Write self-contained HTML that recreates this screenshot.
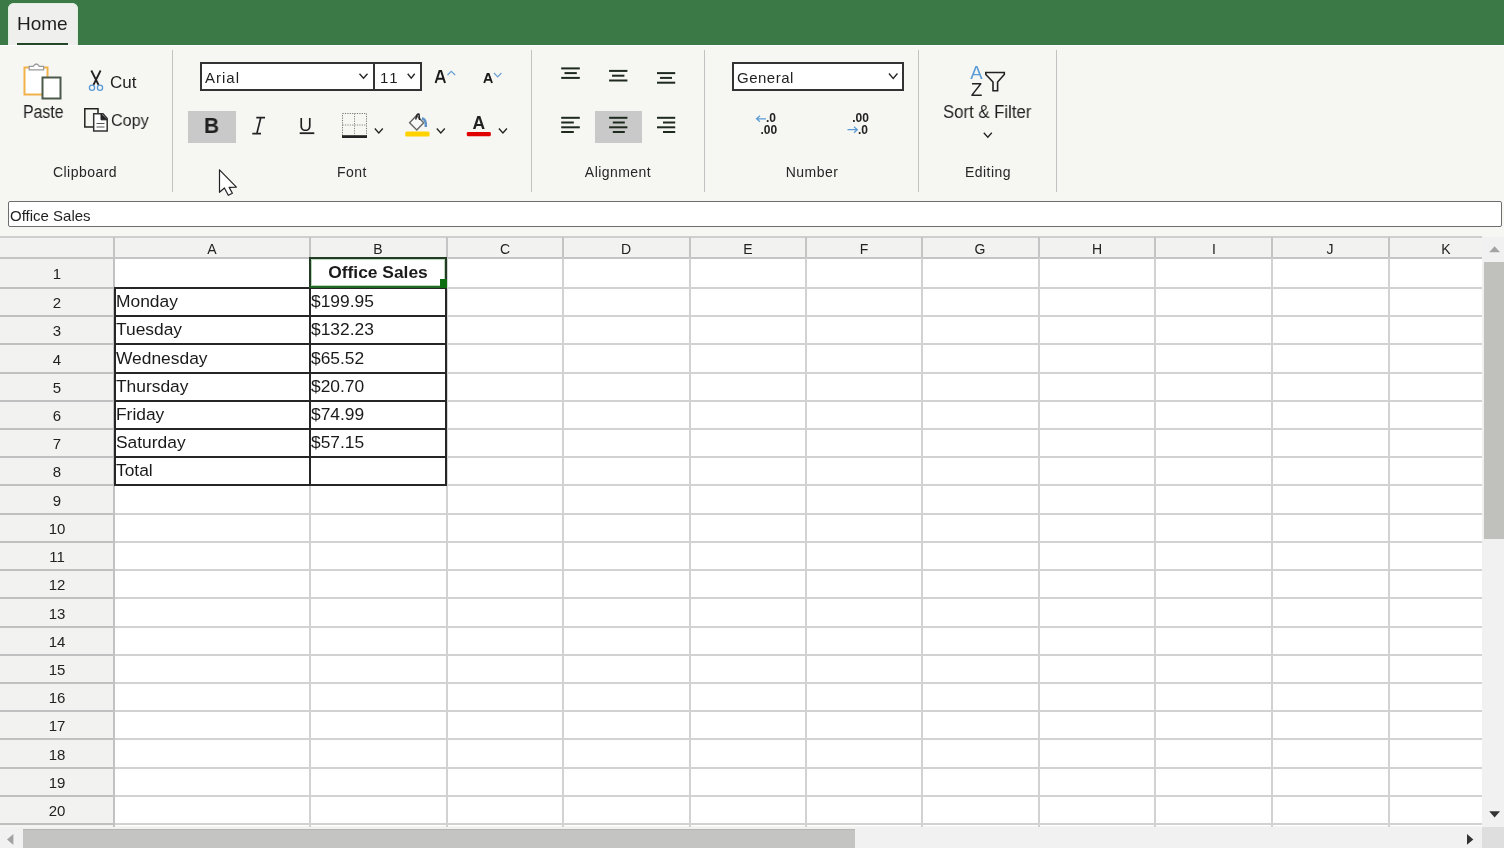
<!DOCTYPE html>
<html><head><meta charset="utf-8"><title>Spreadsheet</title><style>
*{margin:0;padding:0;box-sizing:border-box}
html,body{width:1504px;height:848px;overflow:hidden;background:#f6f6f3;font-family:"Liberation Sans",sans-serif;color:#1f1f1f}
.a{position:absolute}
.t{position:absolute;white-space:nowrap;line-height:1;will-change:transform}
.c{text-align:center}
svg{pointer-events:none}
</style></head><body>
<div class="a" style="left:0;top:0;width:1504px;height:45px;background:#3b7a46"></div>
<div class="a" style="left:8px;top:3px;width:70px;height:43px;background:#efefee;border-radius:6px 6px 0 0;box-shadow:0 0 0 1px #dfeedd inset"></div>
<div class="t" style="left:17px;top:14.2px;font-size:19px;">Home</div>
<div class="a" style="left:0;top:45px;width:1504px;height:1px;background:#fbfbfb"></div>
<div class="a" style="left:17px;top:43px;width:51px;height:2px;background:#24472a"></div>
<div class="a" style="left:172px;top:50px;width:1px;height:142px;background:#c2c2c2"></div>
<div class="a" style="left:531px;top:50px;width:1px;height:142px;background:#c2c2c2"></div>
<div class="a" style="left:704px;top:50px;width:1px;height:142px;background:#c2c2c2"></div>
<div class="a" style="left:918px;top:50px;width:1px;height:142px;background:#c2c2c2"></div>
<div class="a" style="left:1056px;top:50px;width:1px;height:142px;background:#c2c2c2"></div>
<div class="t c" style="left:-65px;top:164.7px;width:300px;font-size:14px;letter-spacing:0.45px;color:#262626">Clipboard</div>
<div class="t c" style="left:202px;top:164.7px;width:300px;font-size:14px;letter-spacing:0.45px;color:#262626">Font</div>
<div class="t c" style="left:468.4px;top:164.7px;width:300px;font-size:14px;letter-spacing:0.45px;color:#262626">Alignment</div>
<div class="t c" style="left:661.8px;top:164.7px;width:300px;font-size:14px;letter-spacing:0.45px;color:#262626">Number</div>
<div class="t c" style="left:837.7px;top:164.7px;width:300px;font-size:14px;letter-spacing:0.45px;color:#262626">Editing</div>
<div class="t" style="left:23px;top:103.0px;font-size:18px;transform:scaleX(0.88);transform-origin:0 0">Paste</div>
<div class="t" style="left:110px;top:73.8px;font-size:17px;">Cut</div>
<div class="t" style="left:110.5px;top:112.2px;font-size:17px;transform:scaleX(0.95);transform-origin:0 0">Copy</div>
<div class="a" style="left:200px;top:62px;width:175px;height:29px;background:#fff;border:2px solid #333"></div>
<div class="a" style="left:373px;top:62px;width:49px;height:29px;background:#fff;border:2px solid #333"></div>
<div class="t" style="left:205px;top:70.0px;font-size:15px;letter-spacing:1px">Arial</div>
<div class="t" style="left:380px;top:70.4px;font-size:15px;letter-spacing:2px">11</div>
<div class="a" style="left:732px;top:62px;width:172px;height:29px;border:2px solid #333;background:#fff"></div>
<div class="t" style="left:737px;top:70.0px;font-size:15px;letter-spacing:0.5px">General</div>
<div class="a" style="left:188px;top:111px;width:48px;height:32px;background:#c9c9c9"></div>
<div class="a" style="left:595px;top:111px;width:47px;height:32px;background:#c9c9c9"></div>
<div class="t" style="left:204.3px;top:115px;font-size:22px;font-weight:bold;transform:scaleX(0.95);transform-origin:0 0">B</div>
<div class="t" style="left:299px;top:116px;font-size:18px;">U</div>
<div class="t" style="left:943px;top:103.2px;font-size:18px;transform:scaleX(0.93);transform-origin:0 0">Sort &amp; Filter</div>
<div class="a" style="left:8px;top:201px;width:1494px;height:26px;background:#fff;border:1px solid #6e6e6e;border-radius:2px"></div>
<div class="t" style="left:10px;top:208.4px;font-size:15px;">Office Sales</div>
<div class="a" style="left:0;top:237px;width:1482px;height:589px;background:#fff"></div>
<div class="a" style="left:0;top:237px;width:1482px;height:20.399999999999977px;background:#f2f2f1"></div>
<div class="a" style="left:0;top:237px;width:114px;height:589px;background:#f2f2f1"></div>
<div class="a" style="left:0;top:236px;width:1482px;height:2px;background:#cfcfcf"></div>
<div class="a" style="left:0;top:256.5px;width:1482px;height:2px;background:#c4c4c4"></div>
<div class="a" style="left:114px;top:287.00px;width:1368px;height:2px;background:#d2d2d2"></div>
<div class="a" style="left:0;top:287.00px;width:114px;height:2px;background:#c0c0c0"></div>
<div class="a" style="left:114px;top:315.21px;width:1368px;height:2px;background:#d2d2d2"></div>
<div class="a" style="left:0;top:315.21px;width:114px;height:2px;background:#c0c0c0"></div>
<div class="a" style="left:114px;top:343.42px;width:1368px;height:2px;background:#d2d2d2"></div>
<div class="a" style="left:0;top:343.42px;width:114px;height:2px;background:#c0c0c0"></div>
<div class="a" style="left:114px;top:371.63px;width:1368px;height:2px;background:#d2d2d2"></div>
<div class="a" style="left:0;top:371.63px;width:114px;height:2px;background:#c0c0c0"></div>
<div class="a" style="left:114px;top:399.84px;width:1368px;height:2px;background:#d2d2d2"></div>
<div class="a" style="left:0;top:399.84px;width:114px;height:2px;background:#c0c0c0"></div>
<div class="a" style="left:114px;top:428.05px;width:1368px;height:2px;background:#d2d2d2"></div>
<div class="a" style="left:0;top:428.05px;width:114px;height:2px;background:#c0c0c0"></div>
<div class="a" style="left:114px;top:456.26px;width:1368px;height:2px;background:#d2d2d2"></div>
<div class="a" style="left:0;top:456.26px;width:114px;height:2px;background:#c0c0c0"></div>
<div class="a" style="left:114px;top:484.47px;width:1368px;height:2px;background:#d2d2d2"></div>
<div class="a" style="left:0;top:484.47px;width:114px;height:2px;background:#c0c0c0"></div>
<div class="a" style="left:114px;top:512.68px;width:1368px;height:2px;background:#d2d2d2"></div>
<div class="a" style="left:0;top:512.68px;width:114px;height:2px;background:#c0c0c0"></div>
<div class="a" style="left:114px;top:540.89px;width:1368px;height:2px;background:#d2d2d2"></div>
<div class="a" style="left:0;top:540.89px;width:114px;height:2px;background:#c0c0c0"></div>
<div class="a" style="left:114px;top:569.10px;width:1368px;height:2px;background:#d2d2d2"></div>
<div class="a" style="left:0;top:569.10px;width:114px;height:2px;background:#c0c0c0"></div>
<div class="a" style="left:114px;top:597.31px;width:1368px;height:2px;background:#d2d2d2"></div>
<div class="a" style="left:0;top:597.31px;width:114px;height:2px;background:#c0c0c0"></div>
<div class="a" style="left:114px;top:625.52px;width:1368px;height:2px;background:#d2d2d2"></div>
<div class="a" style="left:0;top:625.52px;width:114px;height:2px;background:#c0c0c0"></div>
<div class="a" style="left:114px;top:653.73px;width:1368px;height:2px;background:#d2d2d2"></div>
<div class="a" style="left:0;top:653.73px;width:114px;height:2px;background:#c0c0c0"></div>
<div class="a" style="left:114px;top:681.94px;width:1368px;height:2px;background:#d2d2d2"></div>
<div class="a" style="left:0;top:681.94px;width:114px;height:2px;background:#c0c0c0"></div>
<div class="a" style="left:114px;top:710.15px;width:1368px;height:2px;background:#d2d2d2"></div>
<div class="a" style="left:0;top:710.15px;width:114px;height:2px;background:#c0c0c0"></div>
<div class="a" style="left:114px;top:738.36px;width:1368px;height:2px;background:#d2d2d2"></div>
<div class="a" style="left:0;top:738.36px;width:114px;height:2px;background:#c0c0c0"></div>
<div class="a" style="left:114px;top:766.57px;width:1368px;height:2px;background:#d2d2d2"></div>
<div class="a" style="left:0;top:766.57px;width:114px;height:2px;background:#c0c0c0"></div>
<div class="a" style="left:114px;top:794.78px;width:1368px;height:2px;background:#d2d2d2"></div>
<div class="a" style="left:0;top:794.78px;width:114px;height:2px;background:#c0c0c0"></div>
<div class="a" style="left:114px;top:822.99px;width:1368px;height:2px;background:#d2d2d2"></div>
<div class="a" style="left:0;top:822.99px;width:114px;height:2px;background:#c0c0c0"></div>
<div class="a" style="left:113.00px;top:258px;width:2px;height:569px;background:#c2c2c2"></div>
<div class="a" style="left:113.00px;top:237px;width:2px;height:21px;background:#c4c4c4"></div>
<div class="a" style="left:308.50px;top:258px;width:2px;height:569px;background:#d2d2d2"></div>
<div class="a" style="left:308.50px;top:237px;width:2px;height:21px;background:#c4c4c4"></div>
<div class="a" style="left:445.50px;top:258px;width:2px;height:569px;background:#d2d2d2"></div>
<div class="a" style="left:445.50px;top:237px;width:2px;height:21px;background:#c4c4c4"></div>
<div class="a" style="left:562.30px;top:258px;width:2px;height:569px;background:#d2d2d2"></div>
<div class="a" style="left:562.30px;top:237px;width:2px;height:21px;background:#c4c4c4"></div>
<div class="a" style="left:688.50px;top:258px;width:2px;height:569px;background:#d2d2d2"></div>
<div class="a" style="left:688.50px;top:237px;width:2px;height:21px;background:#c4c4c4"></div>
<div class="a" style="left:805.00px;top:258px;width:2px;height:569px;background:#d2d2d2"></div>
<div class="a" style="left:805.00px;top:237px;width:2px;height:21px;background:#c4c4c4"></div>
<div class="a" style="left:921.00px;top:258px;width:2px;height:569px;background:#d2d2d2"></div>
<div class="a" style="left:921.00px;top:237px;width:2px;height:21px;background:#c4c4c4"></div>
<div class="a" style="left:1037.70px;top:258px;width:2px;height:569px;background:#d2d2d2"></div>
<div class="a" style="left:1037.70px;top:237px;width:2px;height:21px;background:#c4c4c4"></div>
<div class="a" style="left:1154.20px;top:258px;width:2px;height:569px;background:#d2d2d2"></div>
<div class="a" style="left:1154.20px;top:237px;width:2px;height:21px;background:#c4c4c4"></div>
<div class="a" style="left:1271.00px;top:258px;width:2px;height:569px;background:#d2d2d2"></div>
<div class="a" style="left:1271.00px;top:237px;width:2px;height:21px;background:#c4c4c4"></div>
<div class="a" style="left:1387.50px;top:258px;width:2px;height:569px;background:#d2d2d2"></div>
<div class="a" style="left:1387.50px;top:237px;width:2px;height:21px;background:#c4c4c4"></div>
<div class="t c" style="left:61.75px;top:241.9px;width:300px;font-size:14px;color:#222">A</div>
<div class="t c" style="left:228.0px;top:241.9px;width:300px;font-size:14px;color:#222">B</div>
<div class="t c" style="left:354.9px;top:241.9px;width:300px;font-size:14px;color:#222">C</div>
<div class="t c" style="left:476.4px;top:241.9px;width:300px;font-size:14px;color:#222">D</div>
<div class="t c" style="left:597.75px;top:241.9px;width:300px;font-size:14px;color:#222">E</div>
<div class="t c" style="left:714.0px;top:241.9px;width:300px;font-size:14px;color:#222">F</div>
<div class="t c" style="left:830.35px;top:241.9px;width:300px;font-size:14px;color:#222">G</div>
<div class="t c" style="left:946.95px;top:241.9px;width:300px;font-size:14px;color:#222">H</div>
<div class="t c" style="left:1063.6px;top:241.9px;width:300px;font-size:14px;color:#222">I</div>
<div class="t c" style="left:1180.25px;top:241.9px;width:300px;font-size:14px;color:#222">J</div>
<div class="t c" style="left:1296.25px;top:241.9px;width:300px;font-size:14px;color:#222">K</div>
<div class="t c" style="left:-93.5px;top:265.8px;width:300px;font-size:15px;color:#222">1</div>
<div class="t c" style="left:-93.5px;top:295.20500000000004px;width:300px;font-size:15px;color:#222">2</div>
<div class="t c" style="left:-93.5px;top:323.415px;width:300px;font-size:15px;color:#222">3</div>
<div class="t c" style="left:-93.5px;top:351.625px;width:300px;font-size:15px;color:#222">4</div>
<div class="t c" style="left:-93.5px;top:379.83500000000004px;width:300px;font-size:15px;color:#222">5</div>
<div class="t c" style="left:-93.5px;top:408.0450000000001px;width:300px;font-size:15px;color:#222">6</div>
<div class="t c" style="left:-93.5px;top:436.255px;width:300px;font-size:15px;color:#222">7</div>
<div class="t c" style="left:-93.5px;top:464.46500000000003px;width:300px;font-size:15px;color:#222">8</div>
<div class="t c" style="left:-93.5px;top:492.67500000000007px;width:300px;font-size:15px;color:#222">9</div>
<div class="t c" style="left:-93.5px;top:520.8850000000001px;width:300px;font-size:15px;color:#222">10</div>
<div class="t c" style="left:-93.5px;top:549.095px;width:300px;font-size:15px;color:#222">11</div>
<div class="t c" style="left:-93.5px;top:577.305px;width:300px;font-size:15px;color:#222">12</div>
<div class="t c" style="left:-93.5px;top:605.515px;width:300px;font-size:15px;color:#222">13</div>
<div class="t c" style="left:-93.5px;top:633.725px;width:300px;font-size:15px;color:#222">14</div>
<div class="t c" style="left:-93.5px;top:661.9350000000001px;width:300px;font-size:15px;color:#222">15</div>
<div class="t c" style="left:-93.5px;top:690.1450000000001px;width:300px;font-size:15px;color:#222">16</div>
<div class="t c" style="left:-93.5px;top:718.3550000000001px;width:300px;font-size:15px;color:#222">17</div>
<div class="t c" style="left:-93.5px;top:746.5649999999999px;width:300px;font-size:15px;color:#222">18</div>
<div class="t c" style="left:-93.5px;top:774.775px;width:300px;font-size:15px;color:#222">19</div>
<div class="t c" style="left:-93.5px;top:802.985px;width:300px;font-size:15px;color:#222">20</div>
<div class="a" style="left:113.5px;top:287.00px;width:333.5px;height:2px;background:#262626"></div>
<div class="a" style="left:113.5px;top:315.21px;width:333.5px;height:2px;background:#262626"></div>
<div class="a" style="left:113.5px;top:343.42px;width:333.5px;height:2px;background:#262626"></div>
<div class="a" style="left:113.5px;top:371.63px;width:333.5px;height:2px;background:#262626"></div>
<div class="a" style="left:113.5px;top:399.84px;width:333.5px;height:2px;background:#262626"></div>
<div class="a" style="left:113.5px;top:428.05px;width:333.5px;height:2px;background:#262626"></div>
<div class="a" style="left:113.5px;top:456.26px;width:333.5px;height:2px;background:#262626"></div>
<div class="a" style="left:113.5px;top:484.47px;width:333.5px;height:2px;background:#262626"></div>
<div class="a" style="left:113.5px;top:287.00px;width:2px;height:199.47px;background:#262626"></div>
<div class="a" style="left:308.5px;top:287.00px;width:2px;height:199.47px;background:#262626"></div>
<div class="a" style="left:445px;top:287.00px;width:2px;height:199.47px;background:#262626"></div>
<div class="t" style="left:115.6px;top:293.105px;font-size:17.4px;color:#1a1a1a">Monday</div>
<div class="t" style="left:311px;top:293.105px;font-size:17.4px;color:#1a1a1a">$199.95</div>
<div class="t" style="left:115.6px;top:321.315px;font-size:17.4px;color:#1a1a1a">Tuesday</div>
<div class="t" style="left:311px;top:321.315px;font-size:17.4px;color:#1a1a1a">$132.23</div>
<div class="t" style="left:115.6px;top:349.525px;font-size:17.4px;color:#1a1a1a">Wednesday</div>
<div class="t" style="left:311px;top:349.525px;font-size:17.4px;color:#1a1a1a">$65.52</div>
<div class="t" style="left:115.6px;top:377.735px;font-size:17.4px;color:#1a1a1a">Thursday</div>
<div class="t" style="left:311px;top:377.735px;font-size:17.4px;color:#1a1a1a">$20.70</div>
<div class="t" style="left:115.6px;top:405.94500000000005px;font-size:17.4px;color:#1a1a1a">Friday</div>
<div class="t" style="left:311px;top:405.94500000000005px;font-size:17.4px;color:#1a1a1a">$74.99</div>
<div class="t" style="left:115.6px;top:434.155px;font-size:17.4px;color:#1a1a1a">Saturday</div>
<div class="t" style="left:311px;top:434.155px;font-size:17.4px;color:#1a1a1a">$57.15</div>
<div class="t" style="left:115.6px;top:462.365px;font-size:17.4px;color:#1a1a1a">Total</div>
<div class="a" style="left:309px;top:257px;width:138px;height:31px;border:2px solid #223b24;border-bottom-color:#1f6a22;box-shadow:inset 0 0 0 1px #b9d8b9"></div>
<div class="t c" style="left:228.2px;top:263.6px;width:300px;font-size:17.4px;font-weight:bold;color:#1a1a1a">Office Sales</div>
<div class="a" style="left:440px;top:279px;width:6.5px;height:9px;background:#0d6e12"></div>
<div class="a" style="left:1482px;top:237px;width:22px;height:590px;background:#f1f1f1"></div>
<div class="a" style="left:1484px;top:261.5px;width:20px;height:277.5px;background:#c0c0bd"></div>
<div class="a" style="left:0;top:827px;width:1482px;height:21px;background:#f1f1f1"></div>
<div class="a" style="left:23px;top:829.3px;width:832px;height:19px;background:#c4c4c2;border-top:1px solid #b5b5b5"></div>
<div class="a" style="left:1482px;top:827px;width:22px;height:21px;background:#dedede"></div>
<svg class="a" style="left:0;top:0" width="1504" height="848" viewBox="0 0 1504 848"><rect x="24.5" y="67.5" width="23" height="27" fill="#fff" stroke="#f2b24a" stroke-width="2"/><path d="M29.2 69.8 L29.2 66.4 L33.2 66.4 Q36.3 61.6 39.4 66.4 L43.6 66.4 L43.6 69.8 Z" fill="#fff" stroke="#9a9a9a" stroke-width="1.3"/><rect x="42.5" y="77.5" width="18" height="21" fill="#fff" stroke="#4b5a4b" stroke-width="2"/><path d="M91.3 70.5 L98.6 85 M100.6 70.5 L93.4 85" stroke="#222" stroke-width="1.8" fill="none"/><circle cx="92" cy="87.8" r="2.6" fill="none" stroke="#5a9bd6" stroke-width="1.3"/><circle cx="100" cy="87.8" r="2.6" fill="none" stroke="#5a9bd6" stroke-width="1.3"/><path d="M97 127 L84.8 127 L84.8 108.8 L98 108.8 L98 113" fill="none" stroke="#222" stroke-width="1.5"/><path d="M93.7 113.8 L103 113.8 L107.2 118.5 L107.2 131 L93.7 131 Z" fill="#fff" stroke="#333" stroke-width="1.5"/><path d="M101 113.8 L107.2 119.8 L101 119.8 Z" fill="#222" stroke="#222" stroke-width="1"/><path d="M96.5 123.5 H104.5 M96.5 127 H104.5" stroke="#555" stroke-width="1"/><path d="M359.5 73.75 L363.5 78.25 L367.5 73.75" fill="none" stroke="#222" stroke-width="1.3"/><path d="M407.7 73.75 L411.2 78.25 L414.7 73.75" fill="none" stroke="#222" stroke-width="1.3"/><path d="M888.95 73.5 L893.2 78.5 L897.45 73.5" fill="none" stroke="#222" stroke-width="1.3"/><path d="M374.8 128.55 L378.8 133.05 L382.8 128.55" fill="none" stroke="#222" stroke-width="1.3"/><path d="M436.8 128.55 L440.8 133.05 L444.8 128.55" fill="none" stroke="#222" stroke-width="1.3"/><path d="M498.9 128.55 L502.9 133.05 L506.9 128.55" fill="none" stroke="#222" stroke-width="1.3"/><path d="M983.8 132.75 L987.8 137.25 L991.8 132.75" fill="none" stroke="#222" stroke-width="1.3"/><path d="M435.6 83 L439.5 70.9 H441.1 L445 83 M437.4 78.8 H443.2" stroke-linejoin="miter" fill="none" stroke="#1a1a1a" stroke-width="2"/><path d="M447.5 75 L451.3 71.3 L455.2 75" fill="none" stroke="#6a9fd4" stroke-width="1.2"/><path d="M484.2 83 L487.5 74 H488.7 L492 83 M485.7 79.9 H490.5" stroke-linejoin="miter" fill="none" stroke="#1a1a1a" stroke-width="1.9"/><path d="M494 73 L497.7 76.8 L501.4 73" fill="none" stroke="#6a9fd4" stroke-width="1.2"/><rect x="299.7" y="132.3" width="14.6" height="1.8" fill="#222"/><rect x="342.5" y="113.5" width="24" height="23" fill="none" stroke="#777" stroke-width="1" stroke-dasharray="1.2 1.2"/><path d="M354.5 113.5 V136 M342.5 125 H366.5" fill="none" stroke="#888" stroke-width="1" stroke-dasharray="1.2 1.2"/><rect x="342" y="135.2" width="25" height="2.8" fill="#222"/><path d="M416.5 115.5 L423.7 122.8 L416.8 130 L409.6 122.8 Z" fill="#f8f8f8" stroke="#666" stroke-width="1.4"/><path d="M415.8 119.5 Q416.5 113.2 419 114.2 L419.6 120" fill="none" stroke="#222" stroke-width="1.5"/><path d="M422 118.3 Q426.5 119.5 425.8 127" fill="none" stroke="#6094c8" stroke-width="2.6"/><rect x="405.2" y="131.5" width="24.4" height="5" rx="1.5" fill="#ffd200"/><text x="472.5" y="128.5" font-family="Liberation Sans" font-weight="bold" font-size="17.5" fill="#222">A</text><rect x="466.8" y="132" width="24" height="4.3" rx="1.2" fill="#e00000"/><rect x="561.2" y="67.4" width="18.59999999999991" height="2" fill="#1e2a1e"/><rect x="564.5" y="72.1" width="12.299999999999955" height="2" fill="#1e2a1e"/><rect x="561.2" y="76.9" width="18.59999999999991" height="2" fill="#1e2a1e"/><rect x="609.1" y="69.9" width="18.299999999999955" height="2" fill="#1e2a1e"/><rect x="612" y="74.7" width="12.399999999999977" height="2" fill="#1e2a1e"/><rect x="609.1" y="79.5" width="18.299999999999955" height="2" fill="#1e2a1e"/><rect x="657" y="72.1" width="18.200000000000045" height="2" fill="#1e2a1e"/><rect x="660" y="76.9" width="12" height="2" fill="#1e2a1e"/><rect x="657" y="81.7" width="18.200000000000045" height="2" fill="#1e2a1e"/><rect x="561.2" y="116.8" width="18.59999999999991" height="2" fill="#1e2a1e"/><rect x="561.2" y="121.5" width="12.599999999999909" height="2" fill="#1e2a1e"/><rect x="561.2" y="126.3" width="18.59999999999991" height="2" fill="#1e2a1e"/><rect x="561.2" y="131" width="12.599999999999909" height="2" fill="#1e2a1e"/><rect x="609.1" y="116.8" width="18.299999999999955" height="2" fill="#1e2a1e"/><rect x="612.8" y="121.5" width="12.0" height="2" fill="#1e2a1e"/><rect x="609.1" y="126.3" width="18.299999999999955" height="2" fill="#1e2a1e"/><rect x="612.8" y="131" width="12.0" height="2" fill="#1e2a1e"/><rect x="657" y="116.8" width="18.200000000000045" height="2" fill="#1e2a1e"/><rect x="663" y="121.5" width="12.200000000000045" height="2" fill="#1e2a1e"/><rect x="657" y="126.3" width="18.200000000000045" height="2" fill="#1e2a1e"/><rect x="663" y="131" width="12.200000000000045" height="2" fill="#1e2a1e"/><text x="766" y="121.7" font-family="Liberation Sans" font-weight="bold" font-size="12" fill="#222">.0</text><text x="760.5" y="134.1" font-family="Liberation Sans" font-weight="bold" font-size="12" fill="#222">.00</text><path d="M766 118.8 H756.8 M760 115.8 L756.5 118.8 L760 121.8" fill="none" stroke="#5b9bd5" stroke-width="1.2"/><text x="852.2" y="121.7" font-family="Liberation Sans" font-weight="bold" font-size="12" fill="#222">.00</text><text x="858" y="134.1" font-family="Liberation Sans" font-weight="bold" font-size="12" fill="#222">.0</text><path d="M847.5 129.7 H857 M854 126.7 L857.3 129.7 L854 132.7" fill="none" stroke="#5b9bd5" stroke-width="1.2"/><text x="970.2" y="78.5" font-family="Liberation Sans" font-size="18.5" fill="#5b9bd5">A</text><text x="970.8" y="96" font-family="Liberation Sans" font-size="19" fill="#222">Z</text><path d="M256.3 117.6 H265 M260.8 117.6 L256.8 133.6 M252.3 133.6 H261" fill="none" stroke="#222" stroke-width="1.7"/><path d="M985.8 72.5 H1004.3 V74.5 L997.6 82 V90.7 H993 V82 L985.8 74.5 Z" fill="none" stroke="#222" stroke-width="1.6" stroke-linejoin="miter"/><path d="M219.5 169.8 L219.5 192.3 L224.4 188 L228.3 195.3 L232.4 193.3 L229.2 187.4 L236.4 187.1 Z" fill="#fff" stroke="#222" stroke-width="1.2" stroke-linejoin="round"/><path d="M1489.2 252.3 L1494.6 246.2 L1500 252.3 Z" fill="#a3a3a3"/><path d="M1489.2 811.2 L1500 811.2 L1494.6 817.4 Z" fill="#333"/><path d="M13.4 834 L13.4 845 L7 839.5 Z" fill="#a3a3a3"/><path d="M1467 834 L1473.3 839.5 L1467 844.8 Z" fill="#333"/></svg>
</body></html>
